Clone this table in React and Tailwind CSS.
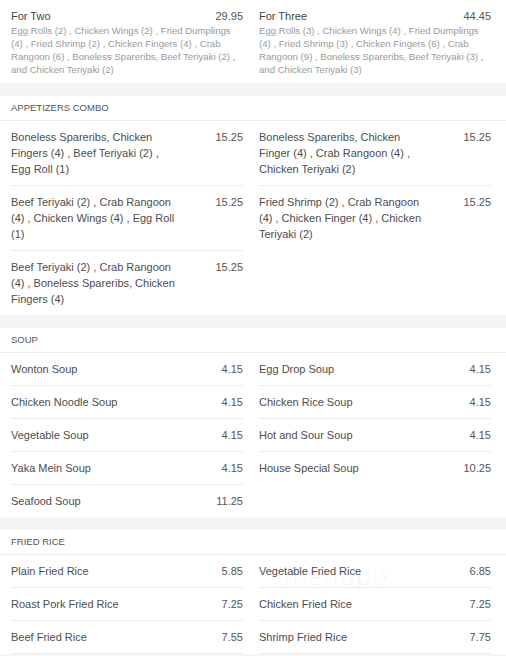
import React from "react";

const appetizers = [
  [
    ["Boneless Spareribs, Chicken Fingers (4) , Beef Teriyaki (2) , Egg Roll (1)", "15.25"],
    ["Beef Teriyaki (2) , Crab Rangoon (4) , Chicken Wings (4) , Egg Roll (1)", "15.25"],
    ["Beef Teriyaki (2) , Crab Rangoon (4) , Boneless Spareribs, Chicken Fingers (4)", "15.25"],
  ],
  [
    ["Boneless Spareribs, Chicken Finger (4) , Crab Rangoon (4) , Chicken Teriyaki (2)", "15.25"],
    ["Fried Shrimp (2) , Crab Rangoon (4) , Chicken Finger (4) , Chicken Teriyaki (2)", "15.25"],
  ],
];

const soups = [
  [
    ["Wonton Soup", "4.15"],
    ["Chicken Noodle Soup", "4.15"],
    ["Vegetable Soup", "4.15"],
    ["Yaka Mein Soup", "4.15"],
    ["Seafood Soup", "11.25"],
  ],
  [
    ["Egg Drop Soup", "4.15"],
    ["Chicken Rice Soup", "4.15"],
    ["Hot and Sour Soup", "4.15"],
    ["House Special Soup", "10.25"],
  ],
];

const friedRice = [
  [
    ["Plain Fried Rice", "5.85"],
    ["Roast Pork Fried Rice", "7.25"],
    ["Beef Fried Rice", "7.55"],
  ],
  [
    ["Vegetable Fried Rice", "6.85"],
    ["Chicken Fried Rice", "7.25"],
    ["Shrimp Fried Rice", "7.75"],
  ],
];

function Item({ name, price, noBorder, wide }) {
  return (
    <div
      className={
        "ml-[6px] mr-[10px] py-2 flex justify-between items-start text-[11px] leading-[16px] " +
        (noBorder ? "" : "border-b border-[#ececec]")
      }
    >
      <div className={wide ? "text-[#4d4d4d]" : "w-[168px] text-[#4d4d4d]"}>{name}</div>
      <div className="text-[#555]">{price}</div>
    </div>
  );
}

function Section({ title, cols, wide, continues }) {
  return (
    <section className="bg-white mt-[13px]">
      <div className="h-[25px] flex items-center px-[11px] text-[9.5px] text-[#555] border-b border-[#ececec]">
        {title}
      </div>
      <div className="grid grid-cols-2 px-[5px]">
        {cols.map((col, ci) => (
          <div key={ci} className="flex flex-col">
            {col.map(([n, p], i) => (
              <Item
                key={i}
                name={n}
                price={p}
                wide={wide}
                noBorder={!continues && i === col.length - 1}
              />
            ))}
          </div>
        ))}
      </div>
    </section>
  );
}

function Combo({ name, price, lines }) {
  return (
    <div className="pl-[6px] pr-[10px] pt-2 pb-[7px]">
      <div className="flex justify-between text-[11px] leading-[16px]">
        <span className="text-[#444]">{name}</span>
        <span className="text-[#555]">{price}</span>
      </div>
      <div className="text-[9.6px] leading-[13px] text-[#9a9a9a]">
        {lines.map((l, i) => (
          <div key={i} className="whitespace-nowrap">
            {l}
          </div>
        ))}
      </div>
    </div>
  );
}

export default function App() {
  return (
    <div className="relative w-[506px] h-[656px] overflow-hidden bg-[#f5f5f5] font-['Liberation_Sans',Arial,sans-serif]">
      <section className="bg-white grid grid-cols-2 px-[5px]">
        <Combo
          name="For Two"
          price="29.95"
          lines={[
            "Egg Rolls (2) , Chicken Wings (2) , Fried Dumplings",
            "(4) , Fried Shrimp (2) , Chicken Fingers (4) , Crab",
            "Rangoon (6) , Boneless Spareribs, Beef Teriyaki (2) ,",
            "and Chicken Teriyaki (2)",
          ]}
        />
        <Combo
          name="For Three"
          price="44.45"
          lines={[
            "Egg Rolls (3) , Chicken Wings (4) , Fried Dumplings",
            "(4) , Fried Shrimp (3) , Chicken Fingers (6) , Crab",
            "Rangoon (9) , Boneless Spareribs, Beef Teriyaki (3) ,",
            "and Chicken Teriyaki (3)",
          ]}
        />
      </section>
      <Section title="APPETIZERS COMBO" cols={appetizers} />
      <Section title="SOUP" cols={soups} wide />
      <Section title="FRIED RICE" cols={friedRice} wide continues />
      <div className="absolute left-[284px] top-[556px] text-[26px] font-light tracking-[1px] text-[rgba(0,0,0,0.06)] font-['Open_Sans',sans-serif] pointer-events-none">
        menupix
      </div>
    </div>
  );
}
